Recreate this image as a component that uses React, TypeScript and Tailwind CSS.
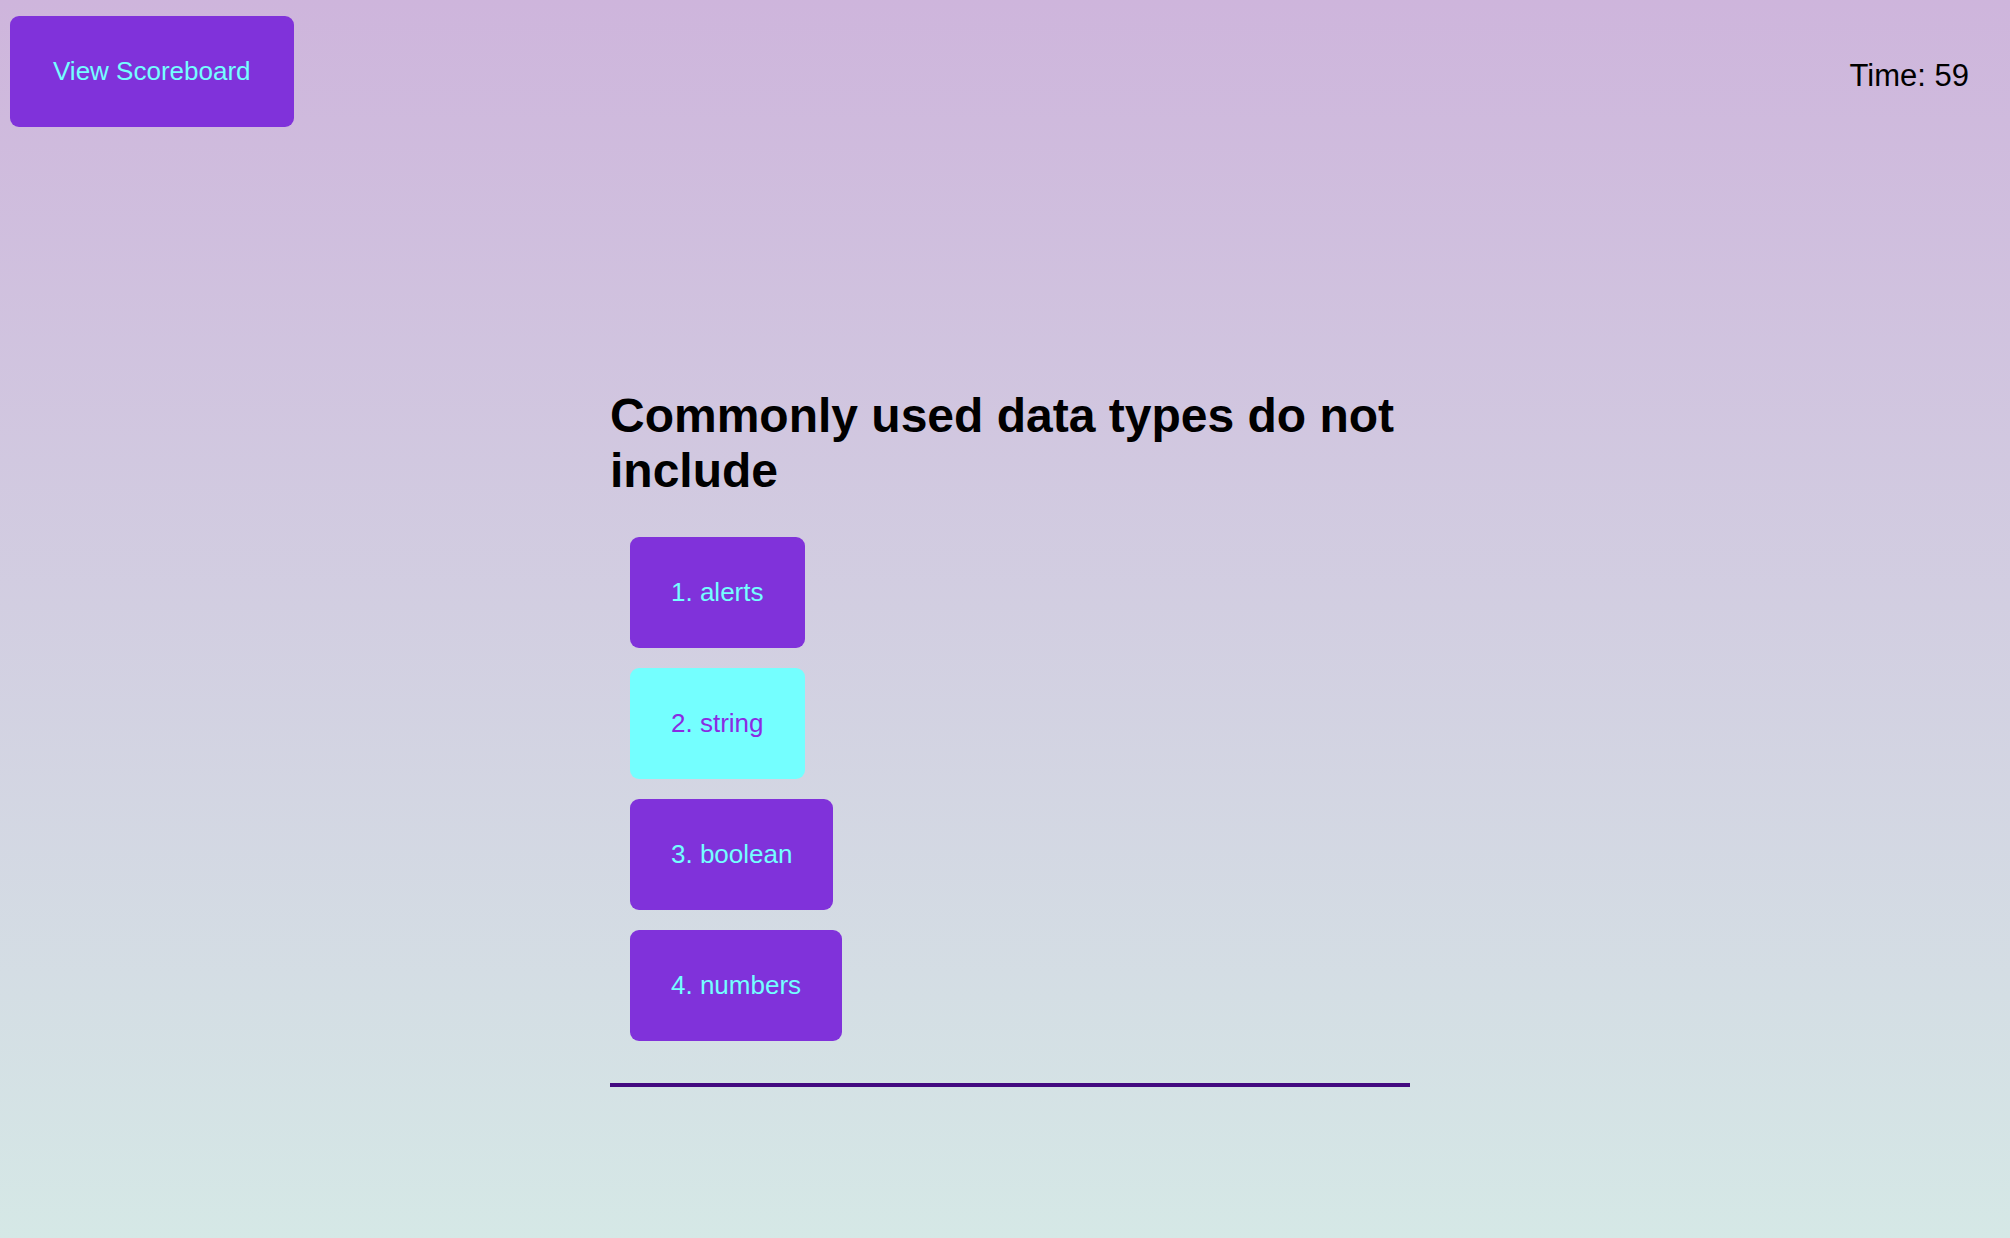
import React from 'react';

const choices = ['1. alerts', '2. string', '3. boolean', '4. numbers'];

export default function App() {
  const active = 1;

  return (
    <div
      className="min-h-screen w-full bg-gradient-to-b from-[#ceb5dc] to-[#d5e8e6] text-black"
      style={{ fontFamily: '"Liberation Sans", Arial, sans-serif' }}
    >
      {/* Header */}
      <header className="flex items-start justify-between pl-[10px] pr-[41px] pt-[16px]">
        <button className="rounded-[9px] bg-[#8032da] px-[43px] py-[40px] text-[26px] leading-[31px] text-[#74ffff]">
          View Scoreboard
        </button>
        <div className="pt-[42px] text-[31px] leading-[36px]">Time: 59</div>
      </header>

      {/* Question */}
      <div className="flex justify-center pl-[10px] pt-[261px]">
        <div className="w-[800px]">
          <h1 className="text-[48px] font-bold leading-[55px]">Commonly used data types do not include</h1>
          <ul className="mt-[39px] flex flex-col items-start gap-[20px] pl-[20px]">
            {choices.map((c, i) => (
              <li key={c}>
                <button
                  className={`rounded-[9px] px-[41px] py-[40px] text-[26px] leading-[31px] ${
                    i === active ? 'bg-[#74ffff] text-[#8a2be2]' : 'bg-[#8032da] text-[#74ffff]'
                  }`}
                >
                  {c}
                </button>
              </li>
            ))}
          </ul>
          <div className="mt-[42px] h-[4px] w-full bg-[#430a80]" />
        </div>
      </div>
    </div>
  );
}
